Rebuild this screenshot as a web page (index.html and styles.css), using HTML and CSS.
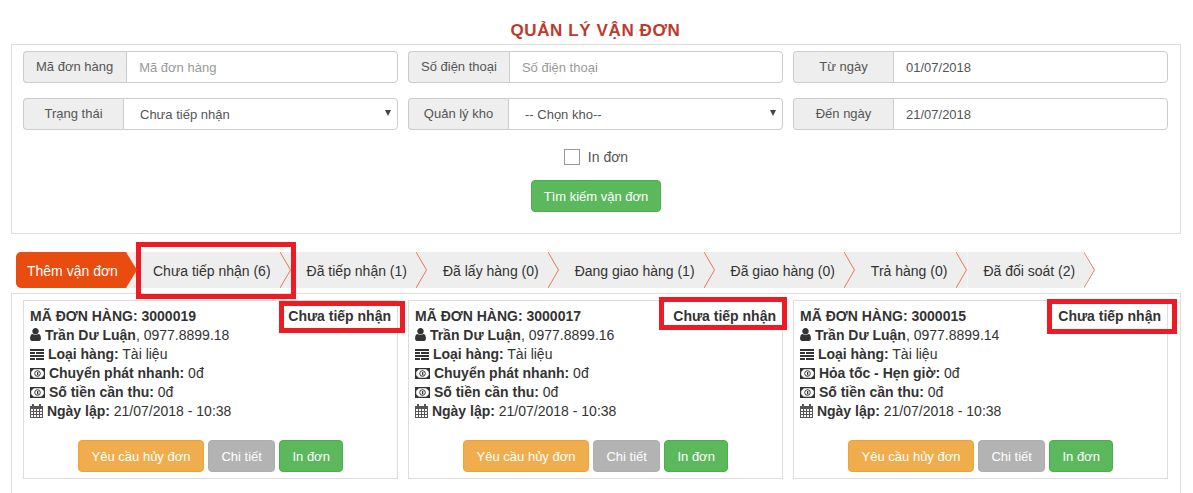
FILE: index.html
```html
<!DOCTYPE html>
<html lang="vi">
<head>
<meta charset="utf-8">
<title>Quản lý vận đơn</title>
<link rel="stylesheet" href="styles.css">
</head>
<body>
<svg class="defs" aria-hidden="true">
  <symbol id="i-user" viewBox="256 128 1280 1536"><path d="M1536 1399q0 109-62.500 187t-150.500 78h-854q-88 0-150.500-78t-62.500-187q0-85 8.500-160.500t31.500-152 58.500-131 94-89 134.500-34.500q131 128 313 128t313-128q76 0 134.500 34.500t94 89 58.500 131 31.500 152 8.500 160.500zm-256-887q0 159-112.500 271.500t-271.500 112.500-271.500-112.500-112.500-271.500 112.500-271.500 271.500-112.500 271.500 112.500 112.500 271.500z"/></symbol>
  <symbol id="i-list" viewBox="0 0 14 11"><path d="M0 0h14v2H0zM0 3h5v2H0zM6 3h8v2H6zM0 6h14v2H0zM0 9h5v2H0zM6 9h8v2H6z"/></symbol>
  <symbol id="i-money" viewBox="0 0 15 11"><path fill-rule="evenodd" d="M0 0h15v11H0zM1.200 1.200v8.600h12.600V1.200z"/><path d="M1 1h3L1 4zM14 1h-3l3 3zM1 10h3L1 7zM14 10h-3l3-3z"/><path d="M7 4h1.300v3.200H7z"/><circle cx="7.500" cy="5.500" r="2.800" fill="none" stroke="#333" stroke-width="1"/></symbol>
  <symbol id="i-cal" viewBox="0 0 13 14"><path fill-rule="evenodd" d="M2 0h2v2h5V0h2v2h2v12H0V2h2zM1 5v2h2V5zm3 0v2h2V5zm3 0v2h2V5zm3 0v2h2V5zM1 8v2h2V8zm3 0v2h2V8zm3 0v2h2V8zm3 0v2h2V8zM1 11v2h2v-2zm3 0v2h2v-2zm3 0v2h2v-2zm3 0v2h2v-2z"/></symbol>
  <symbol id="i-chev" viewBox="0 0 11 36"><path d="M0 0 10.500 18 0 36" fill="none" stroke="#e8774f" stroke-width="1"/></symbol>
</svg>

<h1 class="title">QUẢN LÝ VẬN ĐƠN</h1>

<form class="panel search">
  <div class="fields">
    <div class="group"><span class="addon wide">Mã đơn hàng</span><input class="control" placeholder="Mã đơn hàng"></div>
    <div class="group"><span class="addon">Số điện thoại</span><input class="control" placeholder="Số điện thoại"></div>
    <div class="group"><span class="addon">Từ ngày</span><input class="control" value="01/07/2018"></div>
    <div class="group pick"><span class="addon">Trạng thái</span><select class="control"><option>Chưa tiếp nhận</option></select></div>
    <div class="group pick"><span class="addon">Quản lý kho</span><select class="control"><option>-- Chọn kho--</option></select></div>
    <div class="group"><span class="addon">Đến ngày</span><input class="control" value="21/07/2018"></div>
  </div>
  <label class="check"><span class="box"></span>In đơn</label>
  <div class="search-action"><button type="button" class="btn green">Tìm kiếm vận đơn</button></div>
</form>

<nav class="tabs">
  <a class="add">Thêm vận đơn</a>
  <a class="tab">Chưa tiếp nhận (6)<svg class="chev"><use href="#i-chev"/></svg></a>
  <a class="tab">Đã tiếp nhận (1)<svg class="chev"><use href="#i-chev"/></svg></a>
  <a class="tab">Đã lấy hàng (0)<svg class="chev"><use href="#i-chev"/></svg></a>
  <a class="tab">Đang giao hàng (1)<svg class="chev"><use href="#i-chev"/></svg></a>
  <a class="tab">Đã giao hàng (0)<svg class="chev"><use href="#i-chev"/></svg></a>
  <a class="tab">Trả hàng (0)<svg class="chev"><use href="#i-chev"/></svg></a>
  <a class="tab last">Đã đối soát (2)<svg class="chev"><use href="#i-chev"/></svg></a>
</nav>

<section class="panel orders">
  <article class="card">
    <div class="head"><b>MÃ ĐƠN HÀNG: 3000019</b><b>Chưa tiếp nhận</b></div>
    <div><svg class="ic user"><use href="#i-user"/></svg> <b>Trần Dư Luận</b>, 0977.8899.18</div>
    <div><svg class="ic list"><use href="#i-list"/></svg> <b>Loại hàng:</b> Tài liệu</div>
    <div><svg class="ic money"><use href="#i-money"/></svg> <b>Chuyển phát nhanh:</b> 0đ</div>
    <div><svg class="ic money"><use href="#i-money"/></svg> <b>Số tiền cần thu:</b> 0đ</div>
    <div><svg class="ic cal"><use href="#i-cal"/></svg> <b>Ngày lập:</b> 21/07/2018 - 10:38</div>
    <div class="actions"><button class="btn orange">Yêu cầu hủy đơn</button><button class="btn gray">Chi tiết</button><button class="btn green">In đơn</button></div>
  </article>
  <article class="card">
    <div class="head"><b>MÃ ĐƠN HÀNG: 3000017</b><b>Chưa tiếp nhận</b></div>
    <div><svg class="ic user"><use href="#i-user"/></svg> <b>Trần Dư Luận</b>, 0977.8899.16</div>
    <div><svg class="ic list"><use href="#i-list"/></svg> <b>Loại hàng:</b> Tài liệu</div>
    <div><svg class="ic money"><use href="#i-money"/></svg> <b>Chuyển phát nhanh:</b> 0đ</div>
    <div><svg class="ic money"><use href="#i-money"/></svg> <b>Số tiền cần thu:</b> 0đ</div>
    <div><svg class="ic cal"><use href="#i-cal"/></svg> <b>Ngày lập:</b> 21/07/2018 - 10:38</div>
    <div class="actions"><button class="btn orange">Yêu cầu hủy đơn</button><button class="btn gray">Chi tiết</button><button class="btn green">In đơn</button></div>
  </article>
  <article class="card">
    <div class="head"><b>MÃ ĐƠN HÀNG: 3000015</b><b>Chưa tiếp nhận</b></div>
    <div><svg class="ic user"><use href="#i-user"/></svg> <b>Trần Dư Luận</b>, 0977.8899.14</div>
    <div><svg class="ic list"><use href="#i-list"/></svg> <b>Loại hàng:</b> Tài liệu</div>
    <div><svg class="ic money"><use href="#i-money"/></svg> <b>Hỏa tốc - Hẹn giờ:</b> 0đ</div>
    <div><svg class="ic money"><use href="#i-money"/></svg> <b>Số tiền cần thu:</b> 0đ</div>
    <div><svg class="ic cal"><use href="#i-cal"/></svg> <b>Ngày lập:</b> 21/07/2018 - 10:38</div>
    <div class="actions"><button class="btn orange">Yêu cầu hủy đơn</button><button class="btn gray">Chi tiết</button><button class="btn green">In đơn</button></div>
  </article>
</section>

<div class="mark m1"></div>
<div class="mark m2"></div>
<div class="mark m3"></div>
<div class="mark m4"></div>
</body>
</html>
```

FILE: styles.css
```css
* { box-sizing: border-box; }
html, body { margin: 0; height: 493px; overflow: hidden; background: #fff; }
body { position: relative; font-family: "Liberation Sans", Arial, sans-serif; font-size: 14px; line-height: 19px; color: #333; }
.defs { display: none; }

.title { margin: 0; height: 44px; padding: 20px 2px 0 0; text-align: center; font-size: 17px; line-height: 21px; font-weight: 700; letter-spacing: .6px; color: #c0392b; }

.panel { margin: 0 12px 0 11px; border: 1px solid #ddd; }
.search { height: 190px; padding: 6px 11px 0; }
.fields { display: grid; grid-template-columns: repeat(3, 375px); column-gap: 10px; row-gap: 15px; }
.group { position: relative; display: flex; height: 32px; }
.addon { flex: none; min-width: 100px; padding: 0 12px 2px; display: flex; align-items: center; justify-content: center; font-size: 13px; color: #555; background: #eee; border: 1px solid #ccc; border-right: 0; border-radius: 4px 0 0 4px; white-space: nowrap; }
.addon.wide { padding: 0 13px 2px 12px; }
.control { flex: 1; min-width: 0; height: 32px; padding: 0 12px; font: 13px "Liberation Sans", Arial, sans-serif; color: #555; background: #fff; border: 1px solid #ccc; border-radius: 0 4px 4px 0; }
.control::placeholder { color: #999; opacity: 1; }
select.control { padding-left: 16px; appearance: none; }
.pick::after { content: ""; position: absolute; right: 7px; top: 12px; border-style: solid; border-width: 6px 3px 0; border-color: #444 transparent transparent; pointer-events: none; }

.check { display: flex; justify-content: center; align-items: center; gap: 8px; margin-top: 19px; height: 16px; font-size: 14px; line-height: 16px; color: #555; }
.box { width: 16px; height: 16px; border: 1px solid #999; background: #fff; }
.search-action { display: flex; justify-content: center; margin-top: 15px; }

.btn { height: 32px; padding: 0 12px; font: 13px "Liberation Sans", Arial, sans-serif; color: #fff; border: 1px solid transparent; border-radius: 4px; white-space: nowrap; }
.green { background: #5cb85c; border-color: #4cae4c; }
.orange { background: #f0ad4e; border-color: #eea236; }
.gray { background: #b3b3b3; border-color: #adadad; }

.tabs { display: flex; margin: 18px 0 5px 16px; height: 36px; line-height: 38px; }
.tabs a { display: block; white-space: nowrap; color: #333; }
.tabs .add { position: relative; z-index: 1; width: 121px; margin-right: -11px; padding-left: 11px; background: #e84c0e; color: #fff; border-radius: 5px 0 0 5px; clip-path: polygon(0 0, 110px 0, 100% 50%, 110px 100%, 0 100%); }
.tab { position: relative; padding: 0 20px 0 16px; background: #eee; }
.tab:nth-child(2) { padding-left: 27px; }
.last { clip-path: polygon(0 0, calc(100% - 11px) 0, 100% 50%, calc(100% - 11px) 100%, 0 100%); }
.chev { position: absolute; top: 0; right: 0; width: 11px; height: 36px; }

.orders { height: 210px; padding: 6px 11px 0; display: grid; grid-template-columns: repeat(3, 375px); column-gap: 10px; align-items: start; }
.card { height: 179px; padding: 6px; border: 1px solid #ddd; }
.head { display: flex; justify-content: space-between; }
.card b { font-weight: 700; }
.ic { fill: #333; vertical-align: -1px; }
.user { width: 11px; height: 13px; }
.list { width: 14px; height: 11px; }
.money { width: 15px; height: 11px; }
.cal { width: 13px; height: 14px; vertical-align: -2px; fill: #555; }
.actions { display: flex; justify-content: center; gap: 4.5px; margin-top: 19px; }
.actions .orange { padding: 0 12.5px; }

.mark { position: absolute; border: 5px solid #ed1c24; pointer-events: none; }
.m1 { left: 136px; top: 242px; width: 160px; height: 57px; }
.m2 { left: 279px; top: 301px; width: 126px; height: 32px; }
.m3 { left: 659px; top: 297px; width: 128px; height: 33px; }
.m4 { left: 1047px; top: 299px; width: 130px; height: 35px; }
```
